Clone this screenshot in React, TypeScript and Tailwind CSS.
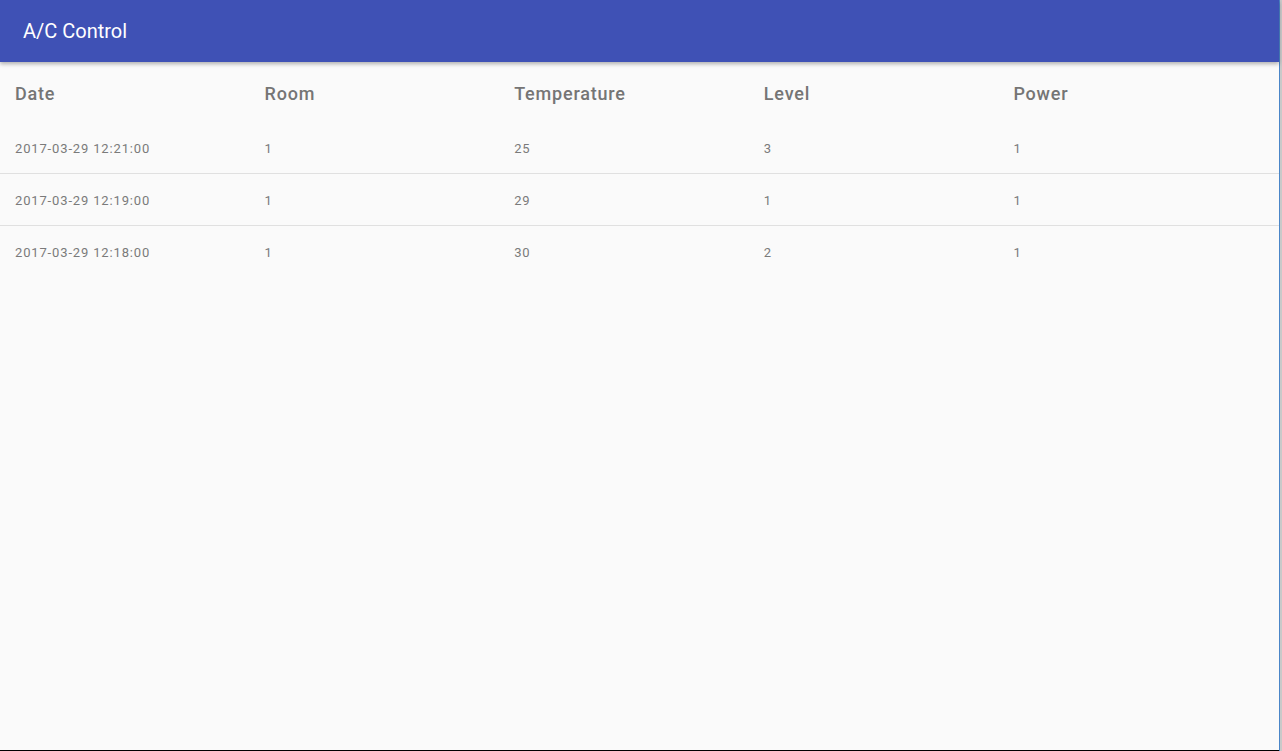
import React from 'react';

const rows = [
  { date: '2017-03-29 12:21:00', room: 1, temperature: 25, level: 3, power: 1 },
  { date: '2017-03-29 12:19:00', room: 1, temperature: 29, level: 1, power: 1 },
  { date: '2017-03-29 12:18:00', room: 1, temperature: 30, level: 2, power: 1 },
];

const columns = ['Date', 'Room', 'Temperature', 'Level', 'Power'];

const App = () => {
  return (
    <div className="flex h-[751px] w-full overflow-hidden bg-[#c9c9c9] font-['Roboto',sans-serif]">
      <div className="flex w-[1279px] flex-col border-b border-black bg-[#fafafa]">
        <header className="relative z-10 flex h-[62px] shrink-0 items-center bg-[#3f51b5] px-[23px] shadow-[0_2px_4px_rgba(0,0,0,0.3)]">
          <h1 className="text-[20px] text-white">A/C Control</h1>
        </header>

        <div className="flex flex-col">
          <div className="grid h-[60px] w-[1248px] grid-cols-5 items-center pt-[2px]">
            {columns.map((col) => (
              <div key={col} className="pl-[15px] text-[18px] font-medium tracking-[0.8px] text-[#757575]">
                {col}
              </div>
            ))}
          </div>

          <div className="divide-y divide-[#e0e0e0]">
            {rows.map((row) => (
              <div key={row.date} className="h-[52px]">
                <div className="grid h-full w-[1248px] grid-cols-5 items-center pt-[2px] text-[13px] tracking-[0.85px] text-[#7a7a7a]">
                  <div className="pl-[15px]">{row.date}</div>
                  <div className="pl-[15px]">{row.room}</div>
                  <div className="pl-[15px]">{row.temperature}</div>
                  <div className="pl-[15px]">{row.level}</div>
                  <div className="pl-[15px]">{row.power}</div>
                </div>
              </div>
            ))}
          </div>
        </div>
      </div>
      <div className="w-px bg-[#4a86c8]" />
      <div className="w-[2px] bg-[#c9c9c9]" />
    </div>
  );
};

export default App;
